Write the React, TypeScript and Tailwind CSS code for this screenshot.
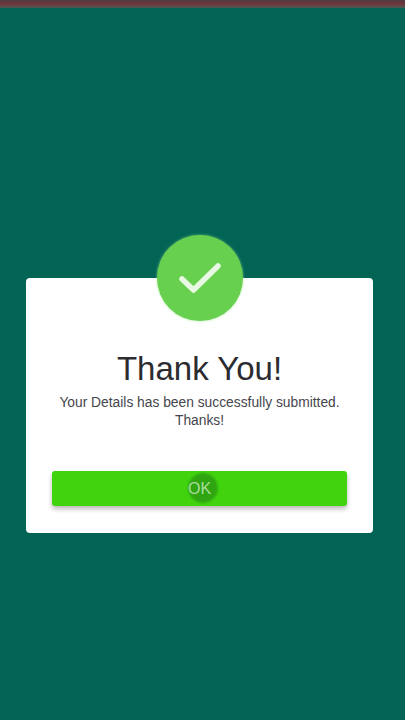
import React from 'react';

const App = () => {
  return (
    <div className="flex h-[720px] w-[405px] flex-col overflow-hidden bg-[#026455] font-['Liberation_Sans',Arial,sans-serif]">
      <div className="h-[8px] w-full bg-gradient-to-b from-[#4d3c42] via-[#73323a] to-[#3f5a54]" />

      <div className="pl-[26px] pr-[32px] pt-[270px]">
        <div className="relative flex h-[255px] w-[347px] flex-col items-center rounded-[4px] bg-white px-[26px] pt-[71px]">
          <div className="absolute left-1/2 top-[-43px] flex h-[86px] w-[86px] -translate-x-1/2 items-center justify-center rounded-full bg-[#68d04f] shadow-[0_0_3px_rgba(150,230,130,0.7)]">
            <svg width="46" height="36" viewBox="0 0 46 36" fill="none">
              <path d="M5 19 L16.5 30 L41 6" stroke="#e8f8e2" strokeWidth="5.5" strokeLinecap="round" strokeLinejoin="round" />
            </svg>
          </div>

          <h1 className="text-center text-[33px] leading-[40px] text-[#2b2b30]">Thank You!</h1>
          <p className="mt-[5px] whitespace-nowrap text-center text-[13.8px] leading-[18px] text-[#45454d]">
            Your Details has been successfully submitted.
            <br />
            Thanks!
          </p>

          <button className="relative mt-[41px] flex h-[35px] w-[295px] shrink-0 items-center justify-center rounded-[3px] bg-[#41d40e] shadow-[0_3px_5px_rgba(0,0,0,0.28)]">
            <span className="absolute left-[136px] top-[2px] h-[30px] w-[30px] rounded-full bg-[#2fa611] blur-[1px]" />
            <span className="relative text-[16px] text-[#a9dd9b]">OK</span>
          </button>
        </div>
      </div>
    </div>
  );
};

export default App;
